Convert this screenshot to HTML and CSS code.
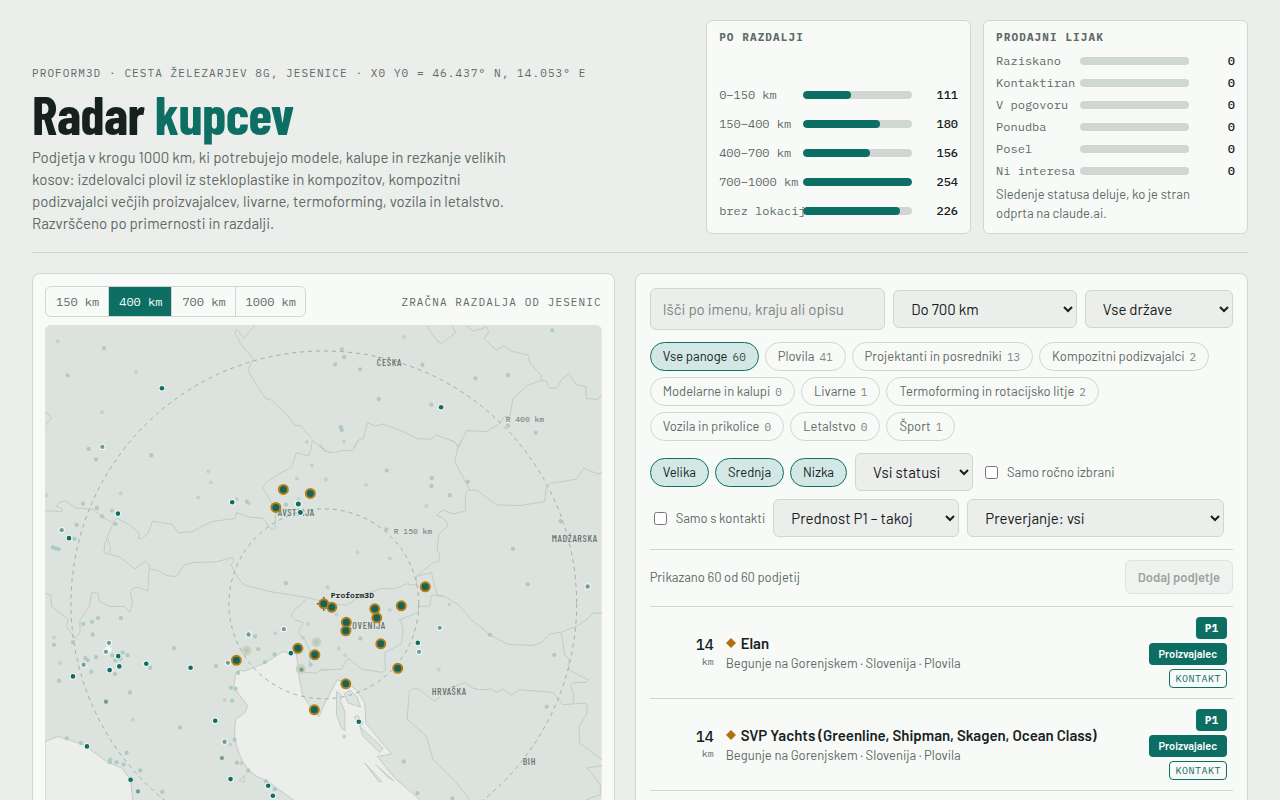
FILE: index.html
```html
<!DOCTYPE html>
<html lang="sl">
<head>
<meta charset="utf-8">
<meta name="viewport" content="width=device-width, initial-scale=1">
<title>Radar kupcev</title>
<link rel="stylesheet" href="styles.css">
</head>
<body>
<header class="top">
  <div class="intro">
    <p class="eyebrow">PROFORM3D · CESTA ŽELEZARJEV 8G, JESENICE · X0 Y0 = 46.437° N, 14.053° E</p>
    <h1 class="title">Radar <span class="accent">kupcev</span></h1>
    <p class="lead">Podjetja v krogu 1000 km, ki potrebujejo modele, kalupe in rezkanje velikih kosov: izdelovalci plovil iz stekloplastike in kompozitov, kompozitni podizvajalci večjih proizvajalcev, livarne, termoforming, vozila in letalstvo. Razvrščeno po primernosti in razdalji.</p>
  </div>
  <div class="stats">
    <section class="stat">
      <h2 class="stat-title">PO RAZDALJI</h2>
      <div class="bars bars-wide">
        <div class="bar-row"><span>0–150 km</span><div class="track"><div class="fill" style="width:43.7%"></div></div><b>111</b></div>
        <div class="bar-row"><span>150–400 km</span><div class="track"><div class="fill" style="width:70.9%"></div></div><b>180</b></div>
        <div class="bar-row"><span>400–700 km</span><div class="track"><div class="fill" style="width:61.4%"></div></div><b>156</b></div>
        <div class="bar-row"><span>700–1000 km</span><div class="track"><div class="fill" style="width:100%"></div></div><b>254</b></div>
        <div class="bar-row"><span>brez lokacij</span><div class="track"><div class="fill" style="width:89%"></div></div><b>226</b></div>
      </div>
    </section>
    <section class="stat">
      <h2 class="stat-title">PRODAJNI LIJAK</h2>
      <div class="bars">
        <div class="bar-row"><span>Raziskano</span><div class="track"></div><b>0</b></div>
        <div class="bar-row"><span>Kontaktiran</span><div class="track"></div><b>0</b></div>
        <div class="bar-row"><span>V pogovoru</span><div class="track"></div><b>0</b></div>
        <div class="bar-row"><span>Ponudba</span><div class="track"></div><b>0</b></div>
        <div class="bar-row"><span>Posel</span><div class="track"></div><b>0</b></div>
        <div class="bar-row"><span>Ni interesa</span><div class="track"></div><b>0</b></div>
      </div>
      <p class="stat-note">Sledenje statusa deluje, ko je stran odprta na claude.ai.</p>
    </section>
  </div>
</header>

<main class="layout">
  <section class="panel map-panel">
    <div class="map-head">
      <div class="segments">
        <button type="button">150 km</button><button type="button" class="on">400 km</button><button type="button">700 km</button><button type="button">1000 km</button>
      </div>
      <span class="eyebrow">ZRAČNA RAZDALJA OD JESENIC</span>
    </div>
    <svg class="map" viewBox="45 325 557 557" role="img" aria-label="Zemljevid podjetij">
      <rect class="land" x="45" y="325" width="557" height="557"/>
      <g transform="translate(30 270) scale(.33333)">
        <path class="border" d="M675 165L642 206 624 180Q614 178 616 190L632 222 670 266 654 300 680 345 708 386 724 390 775 438 795 467 812 467 848 508M45 428Q66 434 62 448L45 466"/>
      </g>
      <g transform="translate(320 270) scale(.33333)">
        <path class="border" d="M0 520L15 540M100 535L120 507 130 507 143 458 165 468 190 462 250 485 290 506 335 508 348 495 405 515 416 535 440 482 500 485 535 465 555 440 570 440 580 385 625 345 665 332 680 333 688 354 712 354 725 330 748 310 768 343 798 350 800 386 835 388 847 375M665 332L665 318 632 280 625 255 580 245 552 228 530 241 492 205 508 185 500 172 460 183 438 165M320 168L352 212 365 221 408 188 396 165"/>
      </g>
      <g transform="translate(30 440) scale(.33333)">
        <path class="border" d="M902 38L882 32 848 0 842 35 835 48 800 38 785 82C730 110 700 130 700 145L725 190 738 215 735 265 728 270 718 262 700 235 660 232 620 218 615 236 545 245 485 276 445 279 427 253 368 244 355 280 335 297 326 296 328 280 300 255 262 235 246 248 215 230 190 208 140 205 105 183Q80 188 80 200L98 208 94 216 45 212M250 248L225 310 222 338 270 352 315 387 345 364 360 378 356 400 354 454 322 442Q302 444 302 460L308 490 300 518 285 500 240 500 208 485 205 460 185 458 178 500 150 540 150 580 135 595 110 560 115 540 65 500 62 465 45 460M234 295L242 330 236 340M360 388L385 392 412 408 440 410 462 376 490 368 560 366 608 352 612 362 604 375 Q630 430 645 436L720 455 830 473 880 485M830 478L790 515Q780 530 795 540L820 548 805 578 825 600 840 630 838 650"/>
      </g>
      <g transform="translate(320 440) scale(.33333)">
        <path class="border" d="M10 485L80 497 120 470 185 446 225 447 260 432 290 436 290 410 335 398 352 465 375 470 420 498 455 540M290 410L340 368 358 365 360 345 352 330 357 282 382 262Q388 240 350 226L368 210 400 222 438 213 437 170Q440 150 450 150L405 65 414 22 425 0M388 0L408 8 416 25M0 16L12 32 40 38 70 32 100 32 115 0M450 150Q475 148 490 165L530 195 600 197 675 185 680 140 695 130 770 118 792 85 835 102 847 98M375 470L335 466 330 498 297 500 295 518 235 542M800 540L820 520 847 520"/>
      </g>
      <g transform="translate(30 620) scale(.33333)">
        <path class="sea" d="M617 160L630 152 645 154 705 130 760 95 790 105 800 100 806 165 818 225 850 275 868 290 880 260 922 180 940 185 980 210 1005 250 1008 310 1085 403 1042 410 1095 475 1170 540 1300 640 1400 800 900 800 790 540 740 505 715 485 680 470C620 430 605 340 620 295Q655 280 652 255L630 228 612 200Z"/>
        <path class="sea" d="M45 365L85 350 160 375 230 425 275 445 302 480 308 540 308 800 45 800Z"/>
        <path class="border" d="M902 150L875 148 860 160 806 156M840 130L838 90M628 482L645 466 642 488Z"/>
      </g>
      <g transform="translate(320 620) scale(.33333)">
        <path class="border" d="M242 0L250 25 245 72 195 98 197 150 188 158 125 148 85 115 65 148 0 152M455 0L510 44 565 74 640 77 665 68 690 42 725 37 770 20 800 0M725 37L735 105 748 118 748 150 805 180 800 188 762 188 752 200 762 220 760 250M436 188L460 205 480 210 515 208 530 218 548 208 575 225 600 210 700 218 730 255 790 250 803 254 800 285 778 320 780 370 847 420M436 188L390 205 345 245 295 207Q270 205 268 220L262 298 320 350 340 420 410 490 450 540M847 438L802 444 842 495 842 525 800 540"/>
        <path class="island" d="M50 215L64 225 62 245 75 275 75 333 65 325 50 285ZM74 222L90 210 112 232 122 262 85 250ZM103 292L113 286 130 310 120 318ZM120 320L190 385 180 398 130 350ZM135 430L186 485 178 487ZM168 435L222 484 200 468Z"/>
      </g>

      <circle class="ring" cx="324" cy="604" r="95"/>
      <circle class="ring" cx="324" cy="604" r="253"/>

      <g class="dots" transform="translate(30 270) scale(.33333)">
        <path class="d-gray" d="M83 214h0M318 306h0M216 427h0M831 516h0"/>
        <path class="d-soft" d="M222 235h0M113 316h0M176 537h0"/>
        <path class="halo" d="M396 355h0M217 531h0"/>
        <path class="d-mid" d="M217 531h0"/>
        <path class="d-dark" d="M396 355h0"/>
      </g>
      <g class="dots" transform="translate(320 270) scale(.33333)">
        <path class="d-gray" d="M252 201h0M72 515h0"/>
        <path class="d-soft" d="M66 238h0M73 261h0M46 283h0M121 298h0M308 285h0M467 325h0M565 315h0M698 181h0M177 387h0M335 404h0M63 472h0M66 480h0M565 467h0M648 488h0"/>
        <path class="halo" d="M364 412h0"/>
        <path class="d-dark" d="M364 412h0"/>
      </g>
      <g class="dots" transform="translate(30 440) scale(.33333)">
        <path class="d-gray" d="M49 167h0M272 160h0M535 94h0M543 127h0M505 173h0M846 76h0M801 116h0M888 119h0M806 178h0M657 190h0M621 178h0M893 442h0"/>
        <path class="d-soft" d="M198 59h0M364 46h0M159 191h0M201 204h0M216 229h0M246 212h0M257 252h0M140 255h0M134 297h0M69 323h0M76 326h0M86 328h0M651 185h0M768 194h0M768 430h0M204 535h0M273 535h0"/>
        <path class="halo" d="M95 271h0M264 221h0M117 295h0M607 187h0M805 192h0M811 218h0"/>
        <path class="d-mid" d="M95 271h0"/>
        <path class="d-dark" d="M264 221h0M117 295h0M607 187h0M805 192h0M811 218h0"/>
      </g>
      <g class="dots" transform="translate(320 440) scale(.33333)">
        <path class="d-gray" d="M18 119h0M139 135h0M320 198h0M113 338h0M210 356h0M24 443h0M389 494h0M210 510h0M50 524h0"/>
        <path class="d-soft" d="M201 92h0M336 114h0M335 138h0M390 166h0M444 126h0M200 269h0M580 327h0M624 433h0M723 244h0"/>
        <path class="halo" d="M804 440h0"/>
        <path class="d-mid" d="M804 440h0"/>
      </g>
      <g class="dots" transform="translate(30 620) scale(.33333)">
        <path class="d-gray" d="M72 53h0M90 130h0M308 300h0M584 240h0M601 374h0M634 430h0M736 40h0M834 12h0M820 54h0"/>
        <path class="d-soft" d="M160 12h0M186 6h0M188 44h0M72 75h0M129 67h0M87 183h0M198 112h0M166 115h0M173 121h0M184 156h0M247 107h0M278 98h0M293 106h0M256 122h0M272 117h0M255 163h0M432 85h0M361 144h0M300 218h0M450 323h0M110 356h0M153 370h0M290 399h0M241 420h0M240 427h0M260 427h0M281 434h0M331 452h0M397 516h0M558 139h0M625 159h0M603 204h0M617 207h0M607 243h0M614 360h0M621 429h0M655 452h0M708 485h0M735 508h0M676 50h0M685 88h0M734 104h0M705 127h0M842 135h0"/>
        <path class="halo" d="M237 69h0M235 89h0M228 96h0M161 135h0M594 129h0M584 366h0M656 44h0M762 28h0M129 170h0M265 109h0M268 140h0M239 151h0M349 132h0M482 144h0M556 303h0M171 380h0M602 478h0M715 498h0M729 528h0M783 100h0"/>
        <path class="d-mid" d="M237 69h0M228 96h0M161 135h0M594 129h0M584 366h0M656 44h0M762 28h0M228 246h0M324 515h0M576 415h0"/>
        <path class="d-dark" d="M129 170h0M265 109h0M268 140h0M239 151h0M349 132h0M482 144h0M556 303h0M171 380h0M302 480h0M602 478h0M715 498h0M729 528h0M783 100h0"/>
        <path class="g-ghost" d="M650 93h0M860 67h0M813 148h0"/>
        <path class="d-soft" d="M650 93h0M860 67h0"/>
        <path class="d-mid" d="M815 150h0"/>
      </g>
      <g class="dots" transform="translate(320 620) scale(.33333)">
        <path class="d-gray" d="M57 86h0M76 107h0M357 149h0M73 350h0"/>
        <path class="d-soft" d="M122 56h0M511 45h0M704 105h0M681 261h0M252 425h0M293 520h0M398 536h0"/>
        <path class="halo" d="M360 24h0M294 69h0M298 96h0M117 306h0"/>
        <path class="d-mid" d="M360 24h0M298 96h0"/>
        <path class="d-dark" d="M294 69h0M117 306h0"/>
      </g>

      <text class="country" x="377" y="366">ČEŠKA</text>
      <text class="country" x="278" y="516">AVSTRIJA</text>
      <text class="country" x="552" y="542">MADŽARSKA</text>
      <text class="country" x="343" y="629">SLOVENIJA</text>
      <text class="country" x="432" y="695">HRVAŠKA</text>
      <text class="country" x="523" y="765">BIH</text>
      <text class="range" x="506" y="422">R 400 km</text>
      <text class="range" x="394" y="534">R 150 km</text>
      <path class="cross" d="M317 604h14M324 597v14"/>

      <g class="dots">
        <path class="halo-sm" d="M298.500 504h0M300.500 512.500h0"/>
        <path class="d-small" d="M298.500 504h0M300.500 512.500h0"/>
        <path class="g-ring" d="M283.500 489.500h0M310.500 493.500h0M276 507.500h0M324 604h0M332 607.500h0M375 609h0M377 618h0M401.500 606h0M425.500 587h0M346.500 622.500h0M346 631h0M381 644h0M398 668.500h0M346 684h0M298 648.500h0M315 655h0M236.500 660.500h0M314.500 710h0"/>
        <path class="g-core" d="M283.500 489.500h0M310.500 493.500h0M276 507.500h0M324 604h0M332 607.500h0M375 609h0M377 618h0M401.500 606h0M425.500 587h0M346.500 622.500h0M346 631h0M381 644h0M398 668.500h0M346 684h0M298 648.500h0M315 655h0M236.500 660.500h0M314.500 710h0"/>
      </g>
      <text class="home" x="331" y="598">Proform3D</text>
    </svg>
  </section>

  <section class="panel list-panel">
    <div class="search-row">
      <input class="field search" type="search" aria-label="Iskanje" placeholder="Išči po imenu, kraju ali opisu">
      <select class="field" aria-label="Razdalja"><option>Do 700 km</option></select>
      <select class="field" aria-label="Država"><option>Vse države</option></select>
    </div>
    <div class="chips sectors">
      <button type="button" class="chip on">Vse panoge <small>60</small></button>
      <button type="button" class="chip">Plovila <small>41</small></button>
      <button type="button" class="chip">Projektanti in posredniki <small>13</small></button>
      <button type="button" class="chip">Kompozitni podizvajalci <small>2</small></button>
      <button type="button" class="chip">Modelarne in kalupi <small>0</small></button>
      <button type="button" class="chip">Livarne <small>1</small></button>
      <button type="button" class="chip">Termoforming in rotacijsko litje <small>2</small></button>
      <button type="button" class="chip">Vozila in prikolice <small>0</small></button>
      <button type="button" class="chip">Letalstvo <small>0</small></button>
      <button type="button" class="chip">Šport <small>1</small></button>
    </div>
    <div class="filters">
      <div class="chips">
        <button type="button" class="chip on">Velika</button>
        <button type="button" class="chip on">Srednja</button>
        <button type="button" class="chip on">Nizka</button>
      </div>
      <select class="field w-status" aria-label="Status"><option>Vsi statusi</option></select>
      <label class="check"><input type="checkbox">Samo ročno izbrani</label>
      <label class="check"><input type="checkbox">Samo s kontakti</label>
      <select class="field w-priority" aria-label="Prednost"><option>Prednost P1 – takoj</option></select>
      <select class="field w-verify" aria-label="Preverjanje"><option>Preverjanje: vsi</option></select>
    </div>
    <div class="summary">
      <span>Prikazano 60 od 60 podjetij</span>
      <button type="button" class="add" disabled>Dodaj podjetje</button>
    </div>
    <ul class="companies">
      <li class="company">
        <div class="dist">14<small>km</small></div>
        <div class="info">
          <h3 class="name"><svg class="gem" viewBox="0 0 10 10" aria-hidden="true"><path d="M5 0l5 5-5 5-5-5z"/></svg>Elan</h3>
          <p class="place">Begunje na Gorenjskem · Slovenija · Plovila</p>
        </div>
        <div class="tags"><span class="tag tag-p">P1</span><span class="tag">Proizvajalec</span><span class="tag-line">KONTAKT</span></div>
      </li>
      <li class="company">
        <div class="dist">14<small>km</small></div>
        <div class="info">
          <h3 class="name"><svg class="gem" viewBox="0 0 10 10" aria-hidden="true"><path d="M5 0l5 5-5 5-5-5z"/></svg>SVP Yachts (Greenline, Shipman, Skagen, Ocean Class)</h3>
          <p class="place">Begunje na Gorenjskem · Slovenija · Plovila</p>
        </div>
        <div class="tags"><span class="tag tag-p">P1</span><span class="tag">Proizvajalec</span><span class="tag-line">KONTAKT</span></div>
      </li>
    </ul>
  </section>
</main>
</body>
</html>
```
FILE: styles.css
```css
:root {
  --bg: #eceeec;
  --panel: #f8faf8;
  --ink: #16211d;
  --muted: #5e6b66;
  --line: #d0d7d3;
  --teal: #0d6e64;
  --teal-soft: #d3e8e5;
  --gold: #b07010;
  --sans: Barlow, Roboto, sans-serif;
  --narrow: "Barlow Condensed", "Roboto Condensed", Roboto, sans-serif;
  --mono: "IBM Plex Mono", "Liberation Mono", monospace;
}
* { box-sizing: border-box; }
html { overflow: hidden; }
body {
  margin: 0;
  padding: 20px 32px 0;
  background: var(--bg);
  color: var(--ink);
  font-family: var(--sans);
  font-size: 15px;
  height: 100vh;
}
h1, h2, h3, p, ul { margin: 0; padding: 0; }
button, input, select { font-family: inherit; color: inherit; }

.top {
  display: grid;
  grid-template-columns: 1.2fr 1fr;
  gap: 24px;
  align-items: end;
  padding-bottom: 18px;
  border-bottom: 1px solid var(--line);
}
.eyebrow {
  font: 11px/16px var(--mono);
  letter-spacing: .1em;
  color: var(--muted);
  white-space: nowrap;
}
.title {
  margin-top: 5px;
  font-family: var(--narrow);
  font-size: 54px;
  line-height: 56px;
  font-weight: 700;
  letter-spacing: -.01em;
}
.accent { color: var(--teal); }
.lead {
  max-width: 480px;
  margin-top: 4px;
  line-height: 22px;
  color: var(--muted);
}

.stats { display: grid; grid-template-columns: 1fr 1fr; gap: 12px; align-self: stretch; }
.stat {
  display: flex;
  flex-direction: column;
  padding: 8px 12px 10px;
  background: var(--panel);
  border: 1px solid var(--line);
  border-radius: 6px;
}
.stat-title {
  font: 700 11px/16px var(--mono);
  letter-spacing: .1em;
  color: var(--muted);
}
.bars { display: grid; gap: 6px; margin-top: 8px; }
.bars-wide { gap: 13px; margin-top: auto; margin-bottom: 4px; }
.bar-row {
  display: grid;
  grid-template-columns: 78px 1fr 40px;
  gap: 6px;
  align-items: center;
  font: 12px/16px var(--mono);
  color: var(--muted);
}
.bar-row span { white-space: nowrap; }
.bar-row b { font-weight: 500; color: var(--ink); text-align: right; }
.track { height: 8px; border-radius: 4px; background: var(--line); overflow: hidden; }
.fill { height: 100%; border-radius: 4px; background: var(--teal); }
.stat-note { margin-top: 6px; padding-right: 12px; font-size: 13px; line-height: 19px; color: var(--muted); }

.layout { display: grid; grid-template-columns: .95fr 1fr; gap: 20px; margin-top: 20px; }
.panel {
  min-width: 0;
  background: var(--panel);
  border: 1px solid var(--line);
  border-radius: 8px;
}
.map-panel { padding: 12px; }
.list-panel { padding: 14px; }

.map-head { display: flex; justify-content: space-between; align-items: center; margin-bottom: 8px; }
.segments {
  display: flex;
  border: 1px solid var(--line);
  border-radius: 6px;
  overflow: hidden;
}
.segments button {
  padding: 6px 9px 6px 10px;
  border: 0;
  background: none;
  font: 12px/17px var(--mono);
  color: var(--muted);
}
.segments button + button { border-left: 1px solid var(--line); }
.segments button.on { background: var(--teal); color: #fff; }

.map { display: block; width: 100%; border-radius: 6px; }
.land { fill: #dce3df; }
.sea { fill: #eceeec; stroke: #c3cbc7; stroke-width: 3; }
.border { fill: none; stroke: #c3cbc7; stroke-width: 3; stroke-linejoin: round; }
.island { fill: #dce3df; stroke: #c3cbc7; stroke-width: 3; }
.ring { fill: none; stroke: #a3ada8; stroke-width: 1; stroke-dasharray: 4 4; }
.dots path { fill: none; stroke-linecap: round; stroke-width: 13; }
.dots .d-gray { stroke: #c6d0cb; stroke-width: 12; }
.dots .d-soft { stroke: #adcbc1; }
.dots .d-mid { stroke: #719f92; }
.dots .d-dark { stroke: #0d6e64; stroke-width: 14; }
.dots .halo { stroke: #f4f8f6; stroke-width: 19; }
.dots .halo-sm { stroke: #f4f8f6; stroke-width: 7; }
.dots .d-small { stroke: #0d6e64; stroke-width: 5; }
.dots .g-ghost { stroke: #cdd0be; stroke-width: 30; }
.dots .g-ring { stroke: #b67d17; stroke-width: 11; }
.dots .g-core { stroke: #126558; stroke-width: 7; }
.country { font: 500 10px var(--narrow); letter-spacing: .06em; fill: #66716c; }
.range { font: 8px var(--mono); fill: #66716c; }
.home { font: 600 8px var(--mono); fill: var(--ink); }
.cross { stroke: var(--ink); stroke-width: 1; }

.search-row {
  display: grid;
  grid-template-columns: 235fr 183fr 148fr;
  gap: 8px;
  align-items: center;
}
.field {
  min-width: 0;
  height: 38px;
  padding: 0 13px;
  border: 1px solid var(--line);
  border-radius: 6px;
  background-color: var(--bg);
  font-size: 15px;
}
.search { width: 100%; height: 42px; padding: 0 12px; }
.search::placeholder { color: #7d8783; }
.chips { display: flex; flex-wrap: wrap; gap: 6px; }
.sectors { max-width: 570px; margin-top: 12px; }
.chip {
  display: flex;
  align-items: center;
  gap: 5px;
  padding: 0 12px;
  border: 1px solid var(--line);
  border-radius: 15px;
  background: none;
  font-size: 13px;
  line-height: 27px;
  color: var(--muted);
  white-space: nowrap;
}
.chip small { font: 11px var(--mono); opacity: .8; }
.chip.on { background: var(--teal-soft); border-color: var(--teal); color: var(--ink); }
.filters { display: flex; flex-wrap: wrap; align-items: center; gap: 8px; margin-top: 12px; padding-right: 4px; }
.w-status { width: 118px; }
.w-priority { width: 186px; }
.w-verify { width: 257px; }
.check { display: flex; align-items: center; gap: 6px; font-size: 13px; color: var(--muted); }

.summary {
  display: flex;
  justify-content: space-between;
  align-items: center;
  margin-top: 12px;
  padding: 10px 0 12px;
  border-top: 1px solid var(--line);
  font-size: 13px;
  color: var(--muted);
}
.add {
  height: 34px;
  padding: 0 12px;
  border: 1px solid var(--line);
  border-radius: 6px;
  background: var(--bg);
  font-size: 13px;
  font-weight: 600;
  color: var(--muted);
  opacity: .6;
}
.companies { list-style: none; border-top: 1px solid var(--line); }
.company {
  display: grid;
  grid-template-columns: 64px 1fr auto;
  gap: 12px;
  align-items: center;
  padding: 10px 6px 10px 0;
  border-bottom: 1px solid var(--line);
}
.dist { font: 500 15px/18px var(--mono); text-align: right; }
.dist small { display: block; font-size: 10px; font-weight: 400; line-height: 16px; color: var(--muted); }
.info { min-width: 0; }
.name { display: flex; align-items: center; gap: 5px; font-size: 15px; line-height: 20px; font-weight: 600; }
.gem { width: 10px; height: 10px; fill: var(--gold); }
.place { font-size: 13px; line-height: 20px; color: var(--muted); }
.tags { display: flex; flex-direction: column; align-items: flex-end; gap: 4px; }
.tag {
  padding: 0 10px;
  border-radius: 4px;
  background: var(--teal);
  color: #fff;
  font-size: 11px;
  line-height: 22px;
  font-weight: 600;
}
.tag-p { padding: 0 9px; font-family: var(--mono); font-weight: 700; }
.tag-line {
  padding: 0 5px;
  border: 1px solid var(--teal);
  border-radius: 4px;
  color: var(--teal);
  font: 10px/17px var(--mono);
  letter-spacing: .05em;
}
```
